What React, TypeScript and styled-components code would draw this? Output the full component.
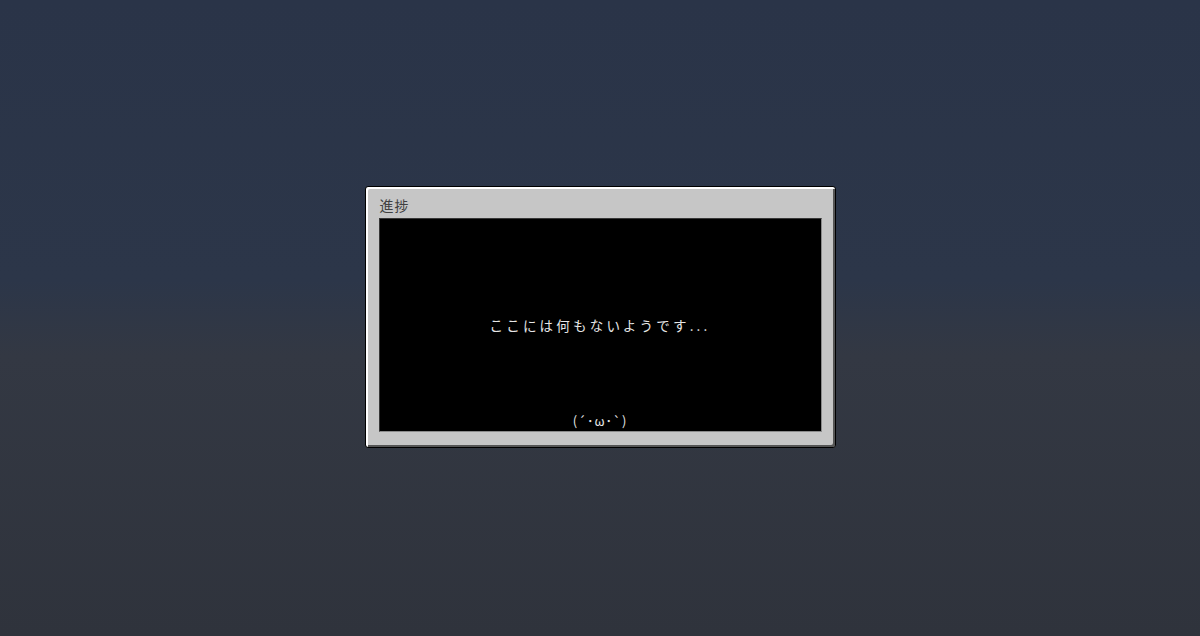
import styled, { createGlobalStyle } from "styled-components";

const GlobalStyle = createGlobalStyle`
    html, body, #root {
        margin: 0;
        height: 100%;
    }
    body {
        background: linear-gradient(
            180deg,
            #2a3448 0%,
            #2c3649 44%,
            #333843 56%,
            #2f333c 100%
        );
        font-family: "Noto Sans CJK JP", "Noto Sans", sans-serif;
    }
`;

const Screen = styled.div`
    height: 100%;
    display: flex;
    align-items: center;
    justify-content: center;
`;

const Window = styled.div`
    box-sizing: border-box;
    width: 471px;
    height: 262px;
    margin-top: -3px;
    display: flex;
    flex-direction: column;
    padding: 8px 13px 15px 13px;
    background-color: #c6c6c6;
    border: 1px solid #000;
    border-radius: 3px;
    box-shadow: inset 2px 2px 0 #ffffff, inset -2px -2px 0 #555555;
`;

const Title = styled.h1`
    margin: 0 0 0 1px;
    height: 23px;
    font-size: 14px;
    line-height: 20px;
    font-weight: 400;
    color: #404040;
    letter-spacing: 1px;
`;

const Viewport = styled.div`
    flex: 1;
    display: grid;
    grid-template-rows: 1fr auto 1fr;
    justify-items: center;
    background-color: #000;
    border-top: 1px solid #373737;
    border-left: 1px solid #373737;
    border-bottom: 1px solid #8b8b8b;
    border-right: 1px solid #8b8b8b;
    color: #e6e6e6;
`;

const Message = styled.p`
    grid-row: 2;
    margin: 0;
    font-size: 13.5px;
    letter-spacing: 3.2px;
`;

const Face = styled.span`
    grid-row: 3;
    align-self: end;
    font-size: 13px;
    letter-spacing: 1px;
    line-height: 16px;
    margin-bottom: 2px;
`;

export default function App() {
    return (
        <>
            <GlobalStyle />
            <Screen>
                <Window>
                    <Title>進捗</Title>
                    <Viewport>
                        <Message>ここには何もないようです...</Message>
                        <Face>(´･ω･`)</Face>
                    </Viewport>
                </Window>
            </Screen>
        </>
    );
}
